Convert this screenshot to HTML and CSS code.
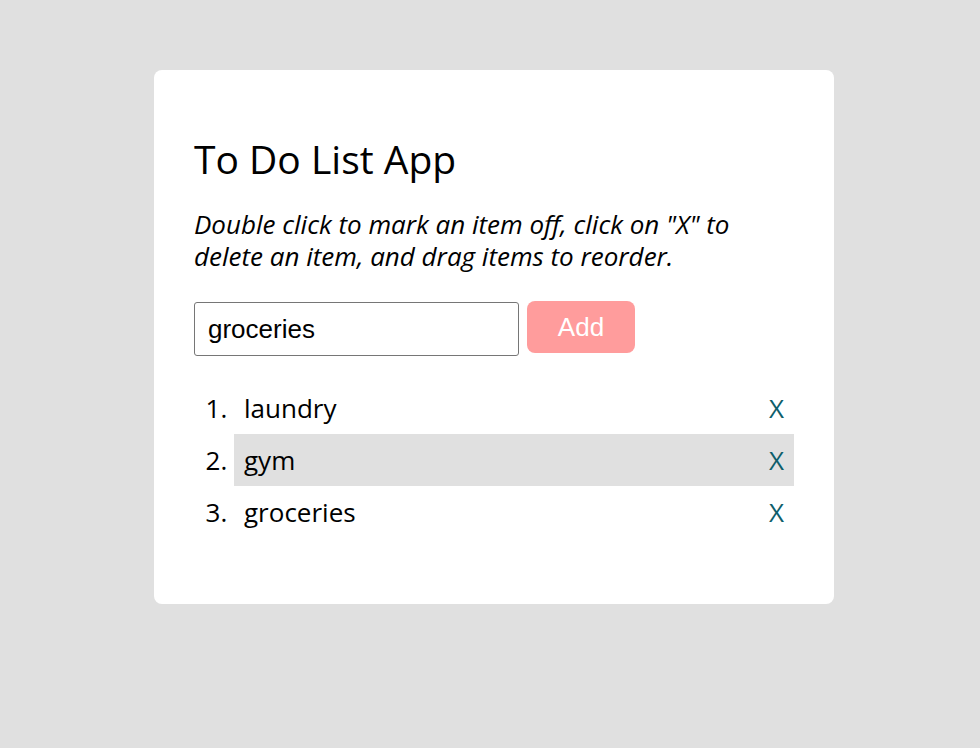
FILE: index.html
```html
<!DOCTYPE html>
<html lang="en">
<head>
    <meta charset="UTF-8">
    <meta name="viewport" content="width=device-width, initial-scale=1.0">
    <title>To Do List App</title>
    <link rel="stylesheet" href="styles.css">
</head>
<body>

    <div class="container">
        <h1>To Do List App</h1>
        <p class="hint">Double click to mark an item off, click on "X" to delete an item, and drag items to reorder.</p>

        <form class="add-form" onsubmit="return false;">
            <input type="text" class="add-input" value="groceries">
            <button type="submit" class="add-button">Add</button>
        </form>

        <ol class="list">
            <li class="item"><div class="item-row"><span>laundry</span><span class="delete">X</span></div></li>
            <li class="item dragging"><div class="item-row"><span>gym</span><span class="delete">X</span></div></li>
            <li class="item"><div class="item-row"><span>groceries</span><span class="delete">X</span></div></li>
        </ol>
    </div>

</body>
</html>
```

FILE: styles.css
```css
body {
    font-family: 'Open Sans', sans-serif;
    background-color: #e0e0e0;
    margin: 0;
    padding: 70px 0 0 8px;
    color: #000;
}
.container {
    box-sizing: border-box;
    width: 680px;
    margin: 0 auto;
    padding: 40px 40px 66px;
    background-color: #fff;
    border-radius: 8px;
}
h1 {
    font-size: 39px;
    font-weight: normal;
    margin: 22px 0 23px;
}
.hint {
    font-size: 26px;
    font-style: italic;
    line-height: 32px;
    margin: 0 0 29px;
}
.add-form {
    display: flex;
    align-items: flex-start;
    gap: 8px;
}
.add-input {
    box-sizing: border-box;
    width: 325px;
    height: 54px;
    margin-top: 1px;
    padding: 0 13px;
    font-family: 'Liberation Sans', Arial, sans-serif;
    font-size: 26px;
    border: 1px solid #767676;
    border-radius: 3px;
}
.add-button {
    width: 108px;
    height: 52px;
    background-color: #ff9c9c;
    color: #fff;
    border: none;
    border-radius: 8px;
    font-family: 'Liberation Sans', Arial, sans-serif;
    font-size: 26px;
    cursor: pointer;
}
.list {
    margin: 26px 0 0;
    padding-left: 40px;
    font-size: 26px;
}
.item {
    height: 52px;
    line-height: 52px;
    padding: 0 10px;
}
.item-row {
    display: flex;
    justify-content: space-between;
}
.dragging {
    background-color: #e0e0e0;
}
.delete {
    color: #0e5e6b;
    cursor: pointer;
}
```
